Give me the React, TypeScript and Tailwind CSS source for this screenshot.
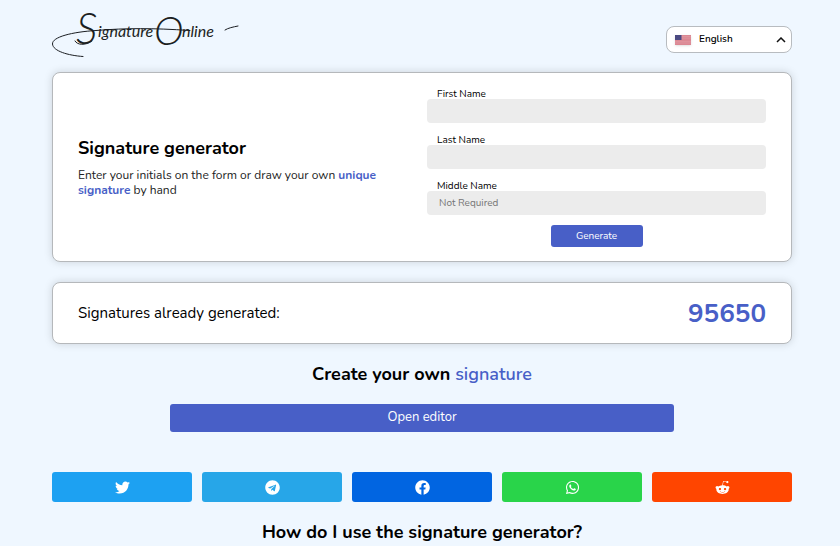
import { useState } from 'react';
import { FaFacebook, FaRedditAlien, FaTelegram, FaTwitter, FaWhatsapp } from 'react-icons/fa';

const shareLinks = [
  { name: 'Twitter', icon: FaTwitter, color: 'bg-[#1da1f2]' },
  { name: 'Telegram', icon: FaTelegram, color: 'bg-[#27a6e8]' },
  { name: 'Facebook', icon: FaFacebook, color: 'bg-[#0165e1]' },
  { name: 'WhatsApp', icon: FaWhatsapp, color: 'bg-[#29d44a]' },
  { name: 'Reddit', icon: FaRedditAlien, color: 'bg-[#ff4500]' },
];

const fields = [
  { id: 'first-name', label: 'First Name', placeholder: '' },
  { id: 'last-name', label: 'Last Name', placeholder: '' },
  { id: 'middle-name', label: 'Middle Name', placeholder: 'Not Required' },
];

function Logo() {
  return (
    <svg viewBox="0 0 192 50" className="w-48 h-12.5 overflow-visible" role="img" aria-label="Signature Online">
      <g className="fill-[#1b1e22] font-['Lato'] italic">
        <text x="24" y="34" fontSize="43" fontWeight="300">S</text>
        <text x="46" y="27" fontSize="16">ignature</text>
        <text x="102" y="35" fontSize="40" fontWeight="300">O</text>
        <text x="130" y="27" fontSize="16">nline</text>
      </g>
      {/* pen flourishes */}
      <g fill="none" stroke="#1b1e22" strokeWidth="1" strokeLinecap="round">
        <path d="M31 46.500C16 45.500 1 41 .500 34C0 27 20 22 44 20.500C75 18 100 18 138 20.500" />
        <path d="M23 31C25 35 33 36 40 31" />
        <path d="M173 20C176 18 181 17 186 16" />
      </g>
    </svg>
  );
}

function FlagUS() {
  return (
    <svg viewBox="0 0 16 10" className="w-4 h-2.5 shrink-0 shadow-sm" aria-hidden="true">
      <rect width="16" height="10" fill="#db8792" />
      <path d="M6 1.5h10M6 3.1h10M0 6.4h16M0 8h16" stroke="#e3a0a8" strokeWidth=".5" />
      <rect width="6.5" height="5" fill="#4b4a82" />
    </svg>
  );
}

export default function App() {
  const [language, setLanguage] = useState('en');

  return (
    <div className="min-h-screen bg-[#eff7ff] pl-13 pr-12 pt-2.5 text-black font-['Nunito','Lato',sans-serif]">
      {/* Header */}
      <header className="flex items-start justify-between">
        <a href="/">
          <Logo />
        </a>
        <div className="mt-4 flex h-[27px] w-[126px] items-center rounded-lg border border-[#b8bcc0] bg-white pl-2 pr-[5px]">
          <FlagUS />
          <select
            aria-label="Language"
            value={language}
            onChange={(e) => setLanguage(e.target.value)}
            className="ml-2 h-5 min-w-0 flex-1 appearance-none bg-transparent text-[10px] font-semibold outline-none"
          >
            <option value="en">English</option>
          </select>
          <svg viewBox="0 0 10 6" className="w-2.5 h-1.5" aria-hidden="true">
            <path d="M1 5L5 1L9 5" fill="none" stroke="#111" strokeWidth="1.5" />
          </svg>
        </div>
      </header>

      <main>
        {/* Generator */}
        <section className="mt-3 grid grid-cols-2 items-center gap-2.5 rounded-lg border border-[#b5b8bb] bg-white px-[25px] pb-3.5 pt-4 shadow-[0_0_8px_rgba(0,0,0,0.15)]">
          <div className="pb-0.5">
            <h1 className="text-lg font-bold leading-6">Signature generator</h1>
            <p className="mt-2 text-xs leading-[15px] text-[#222]">
              Enter your initials on the form or draw your own{' '}
              <b className="font-bold text-[#485fc7]">unique signature</b> by hand
            </p>
          </div>
          <form className="flex flex-col gap-2.5" onSubmit={(e) => e.preventDefault()}>
            <div className="flex flex-col gap-3">
              {fields.map((field) => (
                <div key={field.id} className="flex flex-col">
                  <label htmlFor={field.id} className="pl-2.5 text-[10px] leading-[10px]">
                    {field.label}
                  </label>
                  <input
                    id={field.id}
                    type="text"
                    placeholder={field.placeholder}
                    className="h-6 rounded-sm bg-[#ececec] px-3 text-[10px] outline-none placeholder:text-[#757575]"
                  />
                </div>
              ))}
            </div>
            <button type="submit" className="h-[22px] w-23 self-center rounded-[3px] bg-[#485fc7] text-[10px] text-white">
              Generate
            </button>
          </form>
        </section>

        {/* Counter */}
        <section className="mt-5 flex h-[62px] items-center justify-between rounded-lg border border-[#b5b8bb] bg-white px-[25px] shadow-[0_0_8px_rgba(0,0,0,0.15)]">
          <p className="text-[15px]">Signatures already generated:</p>
          <strong className="text-[26px] font-bold text-[#485fc7]">95650</strong>
        </section>

        {/* Editor */}
        <section className="mt-[18px] flex flex-col items-center">
          <h2 className="text-lg font-bold leading-6">
            Create your own <span className="font-semibold text-[#485fc7]">signature</span>
          </h2>
          <button type="button" className="mt-[18px] h-7 w-[68%] rounded-[3px] bg-[#485fc7] text-[13px] text-white">
            Open editor
          </button>
        </section>

        {/* Share */}
        <nav className="mt-10 grid grid-cols-5 gap-2.5" aria-label="Share">
          {shareLinks.map(({ name, icon: Icon, color }) => (
            <a
              key={name}
              href={`#${name.toLowerCase()}`}
              aria-label={name}
              className={`flex h-[30px] items-center justify-center rounded-[3px] text-[15px] text-white ${color}`}
            >
              <Icon />
            </a>
          ))}
        </nav>

        <h2 className="mt-[18px] text-center text-lg font-bold leading-6">How do I use the signature generator?</h2>
      </main>
    </div>
  );
}
